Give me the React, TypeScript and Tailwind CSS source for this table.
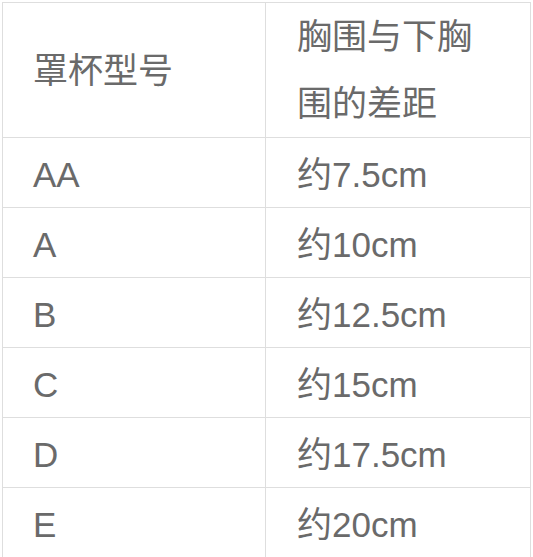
const ROWS: [string, string][] = [
  ["AA", "约7.5cm"],
  ["A", "约10cm"],
  ["B", "约12.5cm"],
  ["C", "约15cm"],
  ["D", "约17.5cm"],
  ["E", "约20cm"],
];

export default function App() {
  return (
    <div
      className="min-h-[557px] bg-white pl-[2px] pt-[2px] overflow-hidden"
      style={{ fontFamily: '"Liberation Sans", "Noto Sans CJK SC", sans-serif' }}
    >
      <table className="w-[529px] border-collapse text-[35px] text-[#6a6a6a]">
        <tbody>
          <tr className="h-[133px]">
            <td className="w-[263px] border border-[#dedede] pl-[30px] align-middle leading-[67px]">
              罩杯型号
            </td>
            <td className="border border-[#dedede] pl-[31px] align-middle leading-[67px]">
              胸围与下胸
              <br />
              围的差距
            </td>
          </tr>
          {ROWS.map(([cup, diff]) => (
            <tr key={cup} className="h-[70px]">
              <td className="border border-[#dedede] pl-[30px] pt-[3px] align-middle leading-none">{cup}</td>
              <td className="border border-[#dedede] pl-[31px] pt-[3px] align-middle leading-none">{diff}</td>
            </tr>
          ))}
        </tbody>
      </table>
    </div>
  );
}
